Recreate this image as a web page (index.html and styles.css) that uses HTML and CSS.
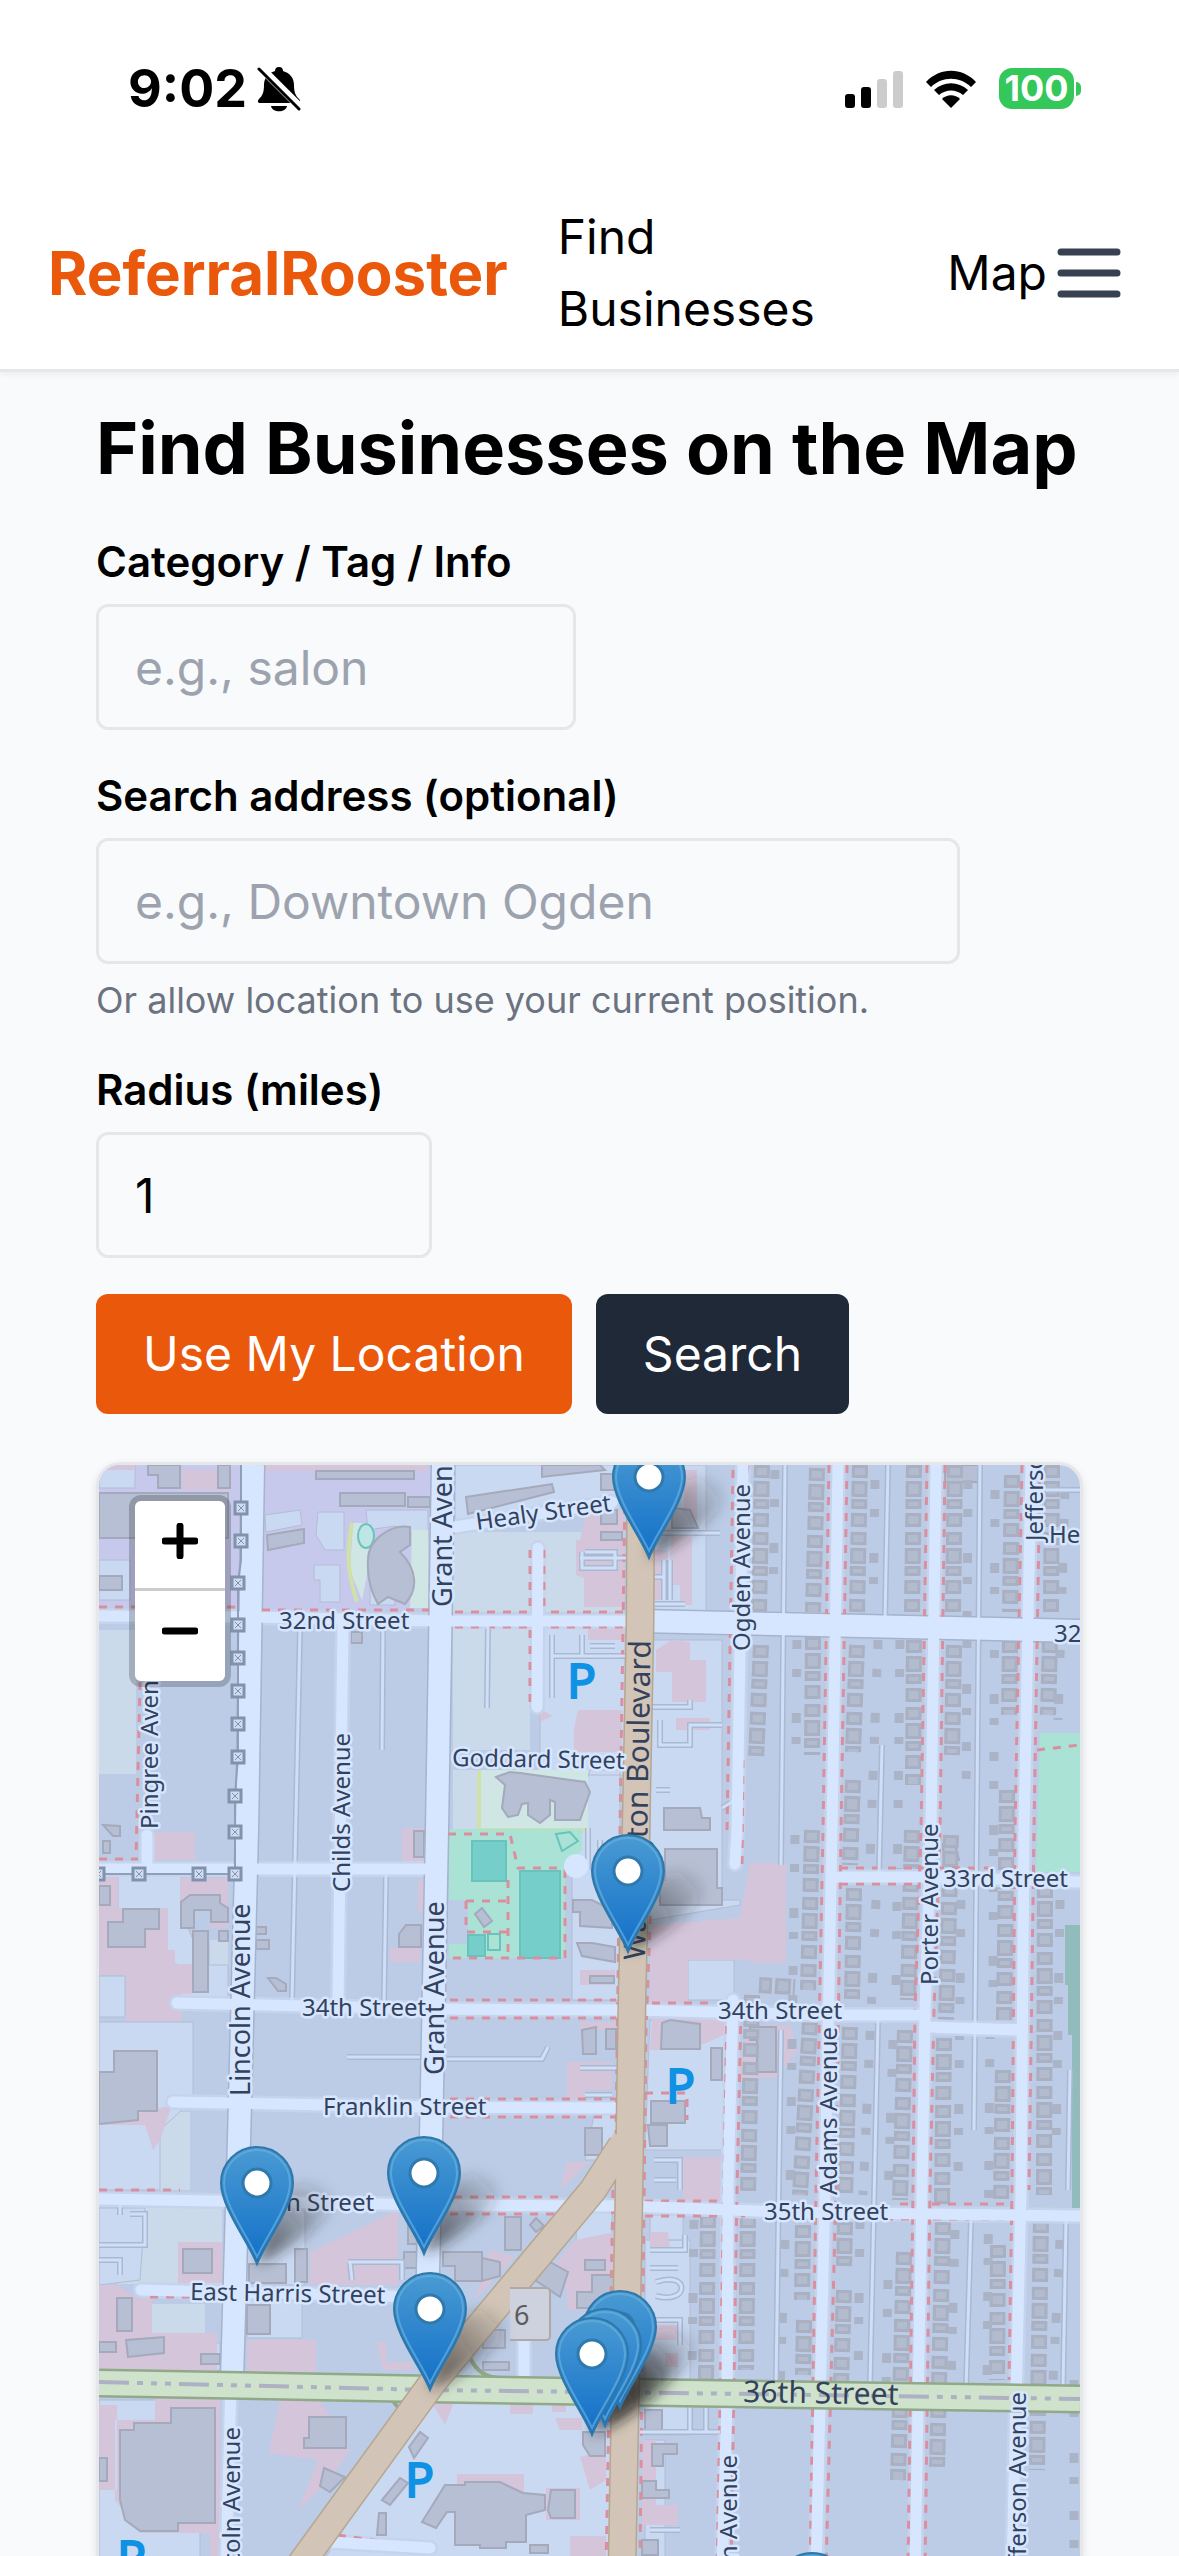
FILE: index.html
```html
<!DOCTYPE html>
<html lang="en">
<head>
<meta charset="utf-8">
<meta name="viewport" content="width=device-width, initial-scale=1">
<title>ReferralRooster – Map</title>
<link rel="stylesheet" href="styles.css">
</head>
<body>
<div class="status">
  <div class="status-left">
    <span class="clock">9:02</span>
    <svg class="bell" viewBox="0 0 44 46" aria-label="Silent">
      <path d="M22 1c3 0 4 2 4 4 7 2 11 7 11 14 0 8 2 11 5 14 2 2 1 4-1 4H3c-2 0-3-2-1-4 3-3 5-6 5-14 0-7 4-12 11-14 0-2 1-4 4-4z"/>
      <path d="M14 40h16c-1 7-15 7-16 0z"/>
      <path d="M2 0l44 44" stroke="#fff" stroke-width="8"/>
      <path d="M2 3l40 40" stroke="#000" stroke-width="3" stroke-linecap="round"/>
    </svg>
  </div>
  <div class="status-right">
    <svg class="signal" viewBox="0 0 58 38" aria-label="Signal">
      <rect x="0" y="24" width="10" height="14" rx="3"/>
      <rect x="16" y="17" width="10" height="21" rx="3"/>
      <rect x="32" y="9" width="10" height="29" rx="3" fill="#ccc"/>
      <rect x="48" y="1" width="10" height="37" rx="3" fill="#ccc"/>
    </svg>
    <svg class="wifi" viewBox="0 0 52 38" aria-label="Wi-Fi">
      <path d="M1 12C15-3 37-3 51 12L46 17C35 6 17 6 6 17z"/>
      <path d="M9 20c10-9 24-9 34 0l-5 5c-7-6-17-6-24 0z"/>
      <path d="M17 29c5-5 13-5 18 0l-9 9z"/>
    </svg>
    <div class="battery"><span class="battery-body">100</span><span class="battery-cap"></span></div>
  </div>
</div>

<header class="header">
  <a class="logo" href="#">ReferralRooster</a>
  <nav class="nav">
    <a class="nav-find" href="#">Find Businesses</a>
    <a href="#">Map</a>
  </nav>
  <button class="menu" type="button" aria-label="Open menu">
    <svg viewBox="0 0 24 24"><path d="M4 6h16M4 12h16M4 18h16"/></svg>
  </button>
</header>

<main class="main">
  <h1 class="title">Find Businesses on the Map</h1>
  <form class="form">
    <div class="field">
      <label for="category">Category / Tag / Info</label>
      <input class="input input-category" id="category" type="text" placeholder="e.g., salon">
    </div>
    <div class="field">
      <label for="address">Search address (optional)</label>
      <input class="input input-address" id="address" type="text" placeholder="e.g., Downtown Ogden">
      <p class="hint">Or allow location to use your current position.</p>
    </div>
    <div class="field">
      <label for="radius">Radius (miles)</label>
      <input class="input input-radius" id="radius" type="text" inputmode="numeric" value="1">
    </div>
    <div class="actions">
      <button class="btn btn-primary" type="button">Use My Location</button>
      <button class="btn btn-dark" type="button">Search</button>
    </div>
  </form>

  <div class="map">
    <svg class="tiles" viewBox="99 1465 981 1100">
      <defs>
        <g id="roads-wide">
          <path d="M253 1465L247 1830L239 2140L232 2380"/>
          <path d="M443 1465L437 1830L430 2190L427 2310"/>
          <path d="M640 1621L1080 1631"/>
        </g>
        <g id="roads-mid">
          <path d="M99 1616L250 1617L440 1621L640 1621"/>
          <path d="M838 1465L832 1830L825 2190L816 2570"/>
          <path d="M936 1465L931 1830L925 2010L922 2190L915 2570"/>
          <path d="M1031 1465L1024 1830L1021 2190L1012 2570"/>
          <path d="M743 1465L737 1830L735 1864"/>
          <path d="M733 2000L728 2190L727 2400L722 2570"/>
          <path d="M99 1869L437 1869"/>
          <path d="M832 1877L931 1877L1080 1882"/>
          <path d="M177 2003L430 2009L632 2010L829 2015L925 2015"/>
          <path d="M925 2027L1022 2030"/>
          <path d="M173 2102L430 2107L632 2108"/>
          <path d="M99 2199L430 2205L628 2206L780 2212L1080 2216"/>
          <path d="M141 2290L420 2297"/>
          <path d="M343 1622L338 2006"/>
          <path d="M538 1548L537 1707"/>
          <path d="M231 2380L226 2570"/>
          <path d="M147 1835V1868M524 2320V2385"/>
          <path d="M455 1527L612 1502M330 2542L430 2548"/>
        </g>
        <g id="roads-thin">
          <path d="M300 1628L292 2000M383 1630L382 1750M386 1875L384 2002M488 1625L487 1708"/>
          <path d="M785 1465L781 1865M781 2030L776 2385M888 1465L885 1620M882 1745L879 1875M878 2020L870 2385M980 1465L974 2130M971 2220L966 2390M1066 2220L1063 2390"/>
          <path d="M347 2057L420 2057M447 2059L542 2059L548 2047M1070 2070L1068 2190"/>
          <path d="M1045 1490H1080M650 1533L720 1533"/>
          <path d="M650 1577H664M664 1560V1600M670 1560V1600M655 1604H685M652 1707H690V1700M660 1720V1745H690V1725H722M656 1790H670"/>
          <path d="M580 1558H628M585 1552H615V1568H582V1552M552 1635V1698M582 1635V1656H625M590 1646H615M552 1656H582"/>
          <path d="M650 2250H685V2235M650 2268H678M656 2282C690 2270 690 2305 656 2296M648 2320H680V2345M640 2432H720M690 2405V2432M706 2405V2432M650 2530H680"/>
          <path d="M580 2068H618M585 2095H612M654 2160H680V2190M654 2180H676M588 1828V1870M600 1840V1870M735 1800L722 1808"/>
          <path d="M120 2215V2205M130 2214H145V2245H99M99 2260H120V2275M348 2262H402V2280M350 2262L352 2280"/>
        </g>
        <g id="lots">
          <path d="M762 1465L759 1612M761 1645L756 1760"/>
          <path d="M817 1468L813 1612M813 1637L812 1755M812 1830L808 1990M810 2022L800 2195M803 2225L802 2300M804 2320L803 2375"/>
          <path d="M860 1465L857 1612M857 1645L853 1752M853 1780L850 1865M854 1888L852 2000M850 2027L845 2195M845 2222L844 2270M844 2290L841 2385"/>
          <path d="M914 1465L912 1612M914 1640L913 1785M912 1830L908 2000M905 2030L900 2200M904 2252L898 2480"/>
          <path d="M955 1465L953 1612M954 1645L952 1755M951 1835L946 2020M944 2038L942 2205M943 2222L937 2470"/>
          <path d="M1012 1475L1010 1612M1010 1640L1009 1715M1007 1790L1004 2020M1003 2070L1001 2200M998 2245L997 2380"/>
          <path d="M1052 1465L1051 1612M1050 1640L1048 1715M1045 1885L1044 2195M1041 2220L1037 2470"/>
          <path d="M708 2215L706 2380M748 2215L746 2370M752 1995L748 2195M759 1985L795 1987"/>
        </g>
        <g id="sheds">
          <path d="M775 1470L773 1600M797 1640L796 1745M795 1835L790 2190M785 2240L780 2390"/>
          <path d="M875 1480L873 1610M878 1640L870 1860M876 1900L863 2195M860 2220L858 2380"/>
          <path d="M900 1640L896 1990M893 2040L888 2200M888 2280L886 2390"/>
          <path d="M968 1480L966 1800M961 1900L958 2180M955 2230L950 2420"/>
          <path d="M995 1490L993 1990M990 2030L987 2390M1065 1490L1058 1720M1060 1900L1056 2150M1060 2240L1050 2440M1074 2380V2570"/>
          <path d="M694 2220L692 2370"/>
        </g>
        <g id="walks">
          <path d="M829 1465L823 1830L816 2190L810 2570M847 1465L841 1830L836 2190L826 2570"/>
          <path d="M927 1465L921 1830L915 2010L913 2190L908 2570M945 1465L940 1830L934 2010L930 2190L925 2570"/>
          <path d="M1022 1465L1015 1830L1012 2190L1009 2380M1040 1465L1034 1830L1029 2190"/>
          <path d="M733 1470L727 1830M748 1465L746 1480M743 1760L742 1865M727 2010L717 2570M741 2010L737 2190L731 2570"/>
          <path d="M625 1490L620 1830L616 2135M613 2190L606 2570M651 1900L646 2030L640 2556"/>
          <path d="M455 1612H627M455 1627H627M450 2000H616M450 2018H616M450 2099H616M450 2117H616M454 2197H560M450 2214H560M645 2201H740M645 2216H745"/>
          <path d="M99 1607H250M262 1610H432M99 1859H138M99 2190H180M840 1868H1000M840 1884H920M652 2003H710M900 2204H1010M885 2219H1010"/>
          <path d="M530 1630V1710M530 1550V1610M544 1550V1610M140 1682L136 1860M645 2093H687V2120M338 2535L420 2547M150 2297H200"/>
          <path d="M448 1834H510L518 1868H560M565 1870V1958H448M508 1880V1958M466 1901H508M466 1901V1932H508M1037 1750L1080 1745M455 2400H640"/>
        </g>
        <linearGradient id="pin-fill" x1="0" y1="0" x2="0" y2="1">
          <stop offset="0" stop-color="#4a9bd3"/><stop offset="1" stop-color="#126fc8"/>
        </linearGradient>
        <filter id="soft" x="-30%" y="-30%" width="160%" height="160%"><feGaussianBlur stdDeviation="7"/></filter>
        <linearGradient id="shade" x1="0" y1="1" x2="1" y2="0">
          <stop offset="0" stop-color="#222" stop-opacity=".75"/><stop offset="1" stop-color="#222" stop-opacity="0"/>
        </linearGradient>
        <path id="pin-shadow" d="M0 0L14-50C26-84 62-88 74-70C84-52 44-22 0 0z" fill="url(#shade)" filter="url(#soft)"/>
        <g id="pin">
          <path d="M0-1C-8-22-36-58-36-82A36 36 0 0 1 36-82C36-58 8-22 0-1z" fill="url(#pin-fill)" stroke="#2e77a9" stroke-width="2"/>
          <path d="M0-8C-9-28-33-60-33-82A33 33 0 0 1 33-82C33-60 9-28 0-8z" fill="none" stroke="#67afde" stroke-width="2" opacity=".7"/>
          <circle cy="-82" r="14" fill="#fff" stroke="#2f79ad" stroke-width="3"/>
        </g>
        <g id="rail-post"><rect x="-6" y="-6" width="12" height="12" fill="#cfdcf2" stroke="#8192ac" stroke-width="3"/><path d="M-3-3L3 3M3-3L-3 3" stroke="#8192ac" stroke-width="1"/></g>
      </defs>

      <rect x="99" y="1465" width="981" height="1100" fill="#bccce6"/>

      <!-- land use -->
      <g fill="#c7c9ec">
        <path d="M99 1465H240V1607H99zM262 1468H433V1610H262z"/>
      </g>
      <g fill="#cbdaeb">
        <path d="M99 1630H136V1774H99zM453 1532H622V1612H453zM453 1628H530V1750H453zM453 1770H480V1830H453zM210 1940H228V1995H210zM158 2112H190V2190H158zM145 2208H222V2284H118zM152 2304H205V2333H152z"/>
      </g>
      <g fill="#c9d9f1" class="lined">
        <path d="M99 1465H135V1488H99zM99 1560H130V1600H99zM455 1465H622V1500L455 1525zM540 1628H625V1775H540zM590 1770H620V2000H572V1830zM650 1465H706V1612H650zM650 1640H722V1900H740V1905L650 1920z"/>
        <path d="M118 1876H181V1912L204 1965H228V1998H177V1964H167V1910H118zM99 1976H125V2017H99zM99 2022H193V2100L160 2130V2190H99zM650 2020H725V2150H645zM595 2110H625V2160H585z"/>
        <path d="M99 2208H145L140 2280L99 2285zM247 2210H305V2285H247zM247 2300H302V2338H247zM190 2343H220V2370H190zM430 2390L615 2402V2570H318zM99 2400H200V2570H99zM650 2215H683V2240H650zM577 2210H612V2250L575 2275zM645 2240H690V2435H645z"/>
        <path d="M265 1515L300 1510L302 1525L266 1532zM318 1512H344V1550H325L316 1535zM314 1565H340V1602H320V1580H314zM366 1510H428V1540L395 1526L368 1530zM645 2440H665V2560H645zM688 1960H734V2000H688zM370 1560H395V1605H370z"/>
      </g>
      <g fill="#d4c5da">
        <path d="M99 1465H135V1470H99zM182 1470H232V1490H182zM262 1465H428V1471H262zM586 1514L624 1510V1607H584V1578L576 1575V1540H580zM578 1710H622V1752H574V1728zM588 1628H625V1640H588zM540 1708L552 1716L540 1722z"/>
        <path d="M656 1650L672 1640L690 1642V1660H706V1702H672V1672H656zM676 1718H710V1730H676zM672 1530H692V1605H680V1585H668zM684 1470H697V1520H684zM153 1832H195V1860H153zM99 1876H118V1908H168V1950H175V1964H192V1994H182V2021H126V1975H99z"/>
        <path d="M180 1878H228V1928H210V1900H180zM402 1828H424V1862H402zM390 1948H420V1962H390zM418 1880H424V1912H418zM750 1863H786V1963H750zM650 1925L740 1918L750 1862V1960H688V2003H650zM652 2018H735V2030L690 2050H650z"/>
        <path d="M580 1970H615V1985H580zM580 2022H616V2030H580zM567 2062H612V2090H585V2100H567zM683 2157H722V2200H683zM567 2162H590L560 2190zM724 2055H745V2080H724zM755 2025H790L798 2050L777 2078H745V2030z"/>
        <path d="M99 2118L150 2111L172 2105L160 2140L153 2150L145 2125H99zM99 2285H117L137 2297H152V2333H217V2372H99zM178 2242H222V2283H178zM247 2340H316V2372H247zM310 2252L398 2210V2285H310zM280 2400H320L350 2450L330 2480L298 2510L318 2460L269 2453z"/>
        <path d="M376 2342H386V2362H412V2370H383zM119 2398H155V2420H115V2500L140 2533H210V2570H220V2398zM99 2405H117V2490H99zM575 2240L615 2232V2310H567V2290L555 2265zM650 2232H668L670 2250H650zM652 2325H680V2340H654zM665 2353H678V2367H665z"/>
        <path d="M457 2474H524V2500L500 2492H457zM510 2402H533V2414H510zM552 2402H566V2412H552zM555 2418H582V2430H560zM580 2457L606 2450V2480L590 2490zM570 2536H606V2570H570zM546 2488H580V2520H546zM642 2440H656V2505H678V2525H642zM430 2400H455L445 2425zM490 2250L515 2257L475 2300zM652 1550H668V1600H652z"/>
      </g>
      <g fill="#cfe6e4"><path d="M480 1770H588V1830H480zM353 1523H370V1560L362 1600L350 1570zM412 1530H428V1608H410z"/></g>
      <path d="M352 1523C345 1560 350 1580 357 1602M479 1770V1830H588" fill="none" stroke="#cfe0a8" stroke-width="4"/>
      <g fill="#aae2d5"><path d="M449 1829H582V1850L565 1870V1958H449V1944H468V1900H449zM1040 1733H1080V1872H1036z"/></g>
      <path d="M1065 1925H1080V2216H1072V2035H1068V1985H1065z" fill="#92bcbc"/>
      <g fill="#76cecb" stroke="#69c3bd" stroke-width="2">
        <path d="M472 1841H506V1881H472zM520 1871H560V1958H520zM468 1935H485V1956H468z"/>
        <path d="M488 1934H500V1950H488zM556 1834L570 1832L578 1841L562 1851z" fill="#aae2d5"/>
        <ellipse cx="366" cy="1536" rx="8" ry="12" fill="#bde6e4"/>
      </g>

      <!-- buildings -->
      <g fill="#b6bfd3" stroke="#a4a9bc" stroke-width="2">
        <path d="M148 1465H180V1488H158V1475H148zM218 1465H230V1488H218zM99 1493H228V1538H99zM99 1576H122V1590H99zM316 1471H414V1479H316zM340 1493H405V1506H340zM408 1497H430V1507H408zM267 1535L304 1529V1543L268 1550z"/>
        <path d="M368 1560C368 1540 390 1524 410 1527V1545L400 1552C418 1570 418 1590 405 1604L388 1597L378 1604C370 1590 367 1575 368 1560z"/>
        <path d="M351 1632H362V1643H351zM466 1497L552 1484L554 1492L468 1514zM542 1465H600L605 1470L542 1477zM601 1474H615V1490H601zM601 1510H617V1524H601zM601 1532H622V1540H601zM672 1508L690 1510L698 1528H672z"/>
        <path d="M496 1777L510 1772L520 1773L585 1782L590 1792L580 1820H555V1802L550 1800V1815L540 1823L528 1815V1803L522 1804L518 1815L508 1817L502 1808L505 1785zM664 1808H700L702 1818H710V1830H664zM945 1465H978V1482H945z"/>
        <path d="M103 1825L120 1826V1836H113zM103 1841H110V1853H103zM99 1886H110V1905H99zM123 1909H159V1929H145V1947H108V1922H123zM181 1902L190 1895H220V1903L228 1908V1922H211V1910H194V1928H181zM193 1931H208V1992H193zM219 1931H228V1941H219z"/>
        <path d="M256 1927H266V1934H256zM256 1940H269V1949H256zM268 1978H276L286 1984V1991H278zM414 1831H424V1857H414zM399 1934L406 1925H421V1947H399zM114 2051H157V2111H138V2120L99 2124V2072H114z"/>
        <path d="M665 1849H717V1888H722V1905H660V1880H665zM573 1900H592L612 1910V1928L580 1926V1912H573zM577 1943H592L615 1947V1962L582 1956zM590 1976H614V1983H590zM582 2030L596 2027V2054H583zM606 2029H616V2049H606zM475 1914L482 1908L492 1921L484 1927z"/>
        <path d="M662 2023L670 2020L700 2024V2049H661zM711 2048H722V2080H711zM651 2101H685V2123H651zM648 2125H667V2146H650zM585 2128H602V2155H585zM750 2027H776V2072H757V2040H750zM943 1844H955L959 1860H944z"/>
        <path d="M183 2249H212V2273H183zM249 2264H286V2283H249zM295 2249H307V2282H295zM117 2298H132V2331H117zM99 2342H116V2352H99zM126 2340L164 2337V2353L128 2357zM201 2354H220V2364H201zM247 2305H270V2334H247zM408 2225H418V2244H408zM404 2252H418V2268H404z"/>
        <path d="M171 2408H215V2523H178V2531H140L125 2520L120 2500V2430H134V2423H171zM309 2417H346V2448H304V2438H309zM324 2468L345 2477L330 2492L320 2486zM99 2458H107V2481H99zM409 2447L420 2432L428 2438L414 2458zM382 2500L400 2478L408 2483L390 2505zM379 2513H386V2535H377z"/>
        <path d="M505 2217H521V2250H505zM530 2225L536 2218L544 2226L536 2232zM443 2252H482V2281H455V2266H443zM482 2258L500 2262V2276L482 2281zM550 2262L568 2272L560 2297L535 2280zM585 2260H605V2270H585zM592 2275H615V2308H577V2292H592zM483 2362H509V2370H483zM483 2330H505V2348H483z"/>
        <path d="M445 2485H465V2482H500L523 2493L545 2495V2510L526 2515V2542H506V2548H480V2545H455V2512H447L436 2528L422 2522zM551 2490H575V2518H551L548 2510zM583 2432H605V2456H590L583 2445zM645 2410H662V2432H645zM652 2444H677V2454H663V2466H652zM642 2481H656V2490H669V2498H642zM642 2540H658V2555H642zM530 2545H548V2553H530z"/>
      </g>

      <!-- residential lots -->
      <use href="#lots" class="lot-edge"/>
      <use href="#lots" class="lot-roof"/>
      <use href="#sheds" class="shed"/>

      <!-- streets -->
      <use href="#roads-thin" class="case-thin"/>
      <use href="#roads-mid" class="case-mid"/>
      <use href="#roads-wide" class="case-wide"/>
      <use href="#walks" class="walk"/>
      <use href="#roads-thin" class="fill-thin"/>
      <use href="#roads-mid" class="fill-mid"/>
      <use href="#roads-wide" class="fill-wide"/>
      <circle cx="576" cy="1866" r="12" fill="#d7e6ff"/>

      <!-- 36th Street -->
      <g fill="none">
        <path d="M99 2383L430 2389L750 2394L1080 2399" stroke="#91a988" stroke-width="29"/>
        <path d="M470 2358Q480 2378 500 2378M392 2400L402 2412" stroke="#91a988" stroke-width="4"/>
        <path d="M99 2383L430 2389L750 2394L1080 2399" stroke="#cfe2cb" stroke-width="24"/>
        <path d="M99 2382L430 2390L750 2394L1080 2399" stroke="#aeb0c4" stroke-width="4" stroke-dasharray="30 8 6 8 6 8 6 8"/>
      </g>

      <!-- Washington Boulevard and diagonal -->
      <g fill="none">
        <path d="M641 1455L640 1625L636 1830L632 2000L629 2190L622 2570M622 2145L593 2190L433 2382L295 2572" stroke="#b6a68f" stroke-width="29"/>
        <path d="M641 1455L640 1625L636 1830L632 2000L629 2190L622 2570M625 2140L593 2190L433 2382L295 2572" stroke="#d2c5b7" stroke-width="26"/>
      </g>

      <!-- power line -->
      <path d="M241 1465V1560L238 1583V1757L235 1796V1874H99" fill="none" stroke="#8f9fba" stroke-width="2"/>
      <g>
        <use href="#rail-post" x="241" y="1508"/><use href="#rail-post" x="241" y="1541"/><use href="#rail-post" x="238" y="1583"/><use href="#rail-post" x="238" y="1625"/><use href="#rail-post" x="238" y="1658"/><use href="#rail-post" x="238" y="1691"/><use href="#rail-post" x="238" y="1724"/><use href="#rail-post" x="238" y="1757"/><use href="#rail-post" x="235" y="1796"/><use href="#rail-post" x="235" y="1832"/><use href="#rail-post" x="235" y="1874"/><use href="#rail-post" x="199" y="1874"/><use href="#rail-post" x="139" y="1874"/><use href="#rail-post" x="98" y="1874"/>
      </g>

      <g class="shield">
        <path d="M510 2288H546Q550 2288 550 2292V2336Q550 2340 546 2340H510" fill="#cdd2de" stroke="#b0aaa6" stroke-width="2"/>
        <text x="514" y="2325">6</text>
      </g>

      <g class="parking">
        <text x="567" y="1698">P</text><text x="666" y="2103">P</text><text x="405" y="2497">P</text><text x="117" y="2575">P</text>
      </g>

      <g class="label">
        <text x="279" y="1629">32nd Street</text>
        <text transform="translate(477 1530) rotate(-8)">Healy Street</text>
        <text transform="translate(452 1766) rotate(1)">Goddard Street</text>
        <text x="302" y="2016">34th Street</text>
        <text x="718" y="2019">34th Street</text>
        <text x="943" y="1887">33rd Street</text>
        <text x="323" y="2115">Franklin Street</text>
        <text x="286" y="2211">n Street</text>
        <text transform="translate(190 2300) rotate(1)">East Harris Street</text>
        <text x="764" y="2220">35th Street</text>
        <text x="1049" y="1543">He</text>
        <text x="1054" y="1642">32</text>
        <text transform="translate(158 1829) rotate(-90)">Pingree Aven</text>
        <text transform="translate(350 1892) rotate(-90)">Childs Avenue</text>
        <text transform="translate(938 1985) rotate(-90)">Porter Avenue</text>
        <text transform="translate(837 2195) rotate(-90)">Adams Avenue</text>
        <text transform="translate(750 1651) rotate(-90)">Ogden Avenue</text>
        <text transform="translate(1043 1541) rotate(-90)">Jefferso</text>
        <text transform="translate(240 2427) rotate(-90)" class="end">coln Avenue</text>
        <text transform="translate(737 2455) rotate(-90)" class="end">n Avenue</text>
        <text transform="translate(1026 2392) rotate(-90)" class="end">fferson Avenue</text>
      </g>
      <g class="label label-major">
        <text transform="translate(452 1607) rotate(-90)">Grant Aven</text>
        <text transform="translate(250 2096) rotate(-90)">Lincoln Avenue</text>
        <text transform="translate(444 2075) rotate(-90)">Grant Avenue</text>
      </g>
      <text class="label-green" transform="translate(743 2402) rotate(1)">36th Street</text>
      <text class="label-blvd" transform="translate(645 1960) rotate(-89)">Washington Boulevard</text>

      <!-- markers -->
      <use href="#pin-shadow" x="649" y="1558"/><use href="#pin-shadow" x="628" y="1952"/><use href="#pin-shadow" x="257" y="2264"/><use href="#pin-shadow" x="424" y="2254"/><use href="#pin-shadow" x="430" y="2390"/><use href="#pin-shadow" x="620" y="2408"/><use href="#pin-shadow" x="605" y="2426"/><use href="#pin-shadow" x="592" y="2435"/>
      <use href="#pin" x="649" y="1559"/><use href="#pin" x="628" y="1953"/><use href="#pin" x="424" y="2255"/><use href="#pin" x="257" y="2265"/><use href="#pin" x="430" y="2391"/><use href="#pin" x="620" y="2409"/><use href="#pin" x="605" y="2427"/><use href="#pin" x="592" y="2436"/><use href="#pin" x="812" y="2671"/>
    </svg>
    <div class="zoom">
      <button type="button" aria-label="Zoom in"><svg viewBox="0 0 36 36"><path d="M3 18h30M18 3v30"/></svg></button>
      <button type="button" aria-label="Zoom out"><svg viewBox="0 0 36 36"><path d="M3 18h30"/></svg></button>
    </div>
  </div>
</main>
</body>
</html>
```

FILE: styles.css
```css
* { box-sizing: border-box; }
body {
  margin: 0;
  height: 100vh;
  overflow: hidden;
  display: flex;
  flex-direction: column;
  background: #f9fafb;
  color: #000;
  font: 400 48px/72px Inter, "Liberation Sans", sans-serif;
}
a { color: inherit; text-decoration: none; }
button { font: inherit; border: 0; padding: 0; }
svg { display: block; }

/* Status bar */
.status {
  height: 177px;
  flex: none;
  display: flex;
  justify-content: space-between;
  align-items: center;
  padding: 0 98px 0 128px;
  background: #fff;
}
.status-left, .status-right, .battery { display: flex; align-items: center; }
.status-left { gap: 10px; }
.status-right { gap: 22px; }
.clock { font-size: 52px; font-weight: 700; }
.bell { width: 44px; height: 46px; }
.signal { width: 58px; height: 38px; }
.wifi { width: 52px; height: 38px; }
.battery { gap: 2px; }
.battery-body {
  width: 75px;
  border-radius: 13px;
  background: #34c759;
  color: #fff;
  font-size: 36px;
  font-weight: 700;
  line-height: 41px;
  text-align: center;
}
.battery-cap { width: 5px; height: 14px; border-radius: 0 6px 6px 0; background: #34c759; }

/* Header */
.header {
  flex: none;
  display: flex;
  align-items: center;
  padding: 24px 48px;
  background: #fff;
  border-bottom: 3px solid #e5e7eb;
  box-shadow: 0 3px 6px rgba(0, 0, 0, .05);
}
.logo { color: #ea580c; font-size: 60px; font-weight: 700; margin-right: 50px; }
.nav { flex: 1; display: flex; align-items: center; justify-content: space-between; }
.nav-find { flex: 0 1 288px; }
.menu { background: none; }
.menu svg { width: 84px; height: 84px; fill: none; stroke: #374151; stroke-width: 2; stroke-linecap: round; }

/* Search form */
.main { flex: 1; min-height: 0; display: flex; flex-direction: column; padding: 28px 96px 0; }
.title { margin: 0 0 36px; font-size: 72px; line-height: 96px; font-weight: 700; }
.form { display: flex; flex-direction: column; gap: 36px; margin-bottom: 48px; }
.field { display: flex; flex-direction: column; align-items: flex-start; gap: 12px; }
.field label { font-size: 42px; line-height: 60px; font-weight: 600; }
.input {
  max-width: 100%;
  height: 126px;
  padding: 0 36px;
  border: 3px solid #e5e7eb;
  border-radius: 12px;
  background: transparent;
  color: #000;
  font: inherit;
}
.input::placeholder { color: #9ca3af; opacity: 1; }
.input-category { width: 480px; }
.input-address { width: 864px; }
.input-radius { width: 336px; }
.hint { margin: 0; color: #6b7280; font-size: 36px; line-height: 48px; }
.actions { display: flex; gap: 24px; }
.btn { padding: 24px 47px; border-radius: 12px; color: #fff; }
.btn-primary { background: #ea580c; }
.btn-dark { background: #1f2937; }

/* Map */
.map {
  position: relative;
  flex: 1;
  min-height: 0;
  overflow: hidden;
  border: 3px solid #e5e7eb;
  border-bottom: 0;
  border-radius: 24px 24px 0 0;
  box-shadow: 0 3px 9px rgba(0, 0, 0, .1);
}
.tiles { width: 100%; height: auto; }
.zoom {
  position: absolute;
  top: 30px;
  left: 30px;
  border: 6px solid rgba(0, 0, 0, .2);
  border-radius: 12px;
  background-clip: padding-box;
}
.zoom button {
  display: flex;
  align-items: center;
  justify-content: center;
  width: 90px;
  height: 90px;
  padding-bottom: 10px;
  background: #fff;
}
.zoom button:first-child { padding-bottom: 7px; border-bottom: 3px solid #ccc; border-radius: 6px 6px 0 0; }
.zoom button:last-child { border-radius: 0 0 6px 6px; }
.zoom svg { width: 36px; height: 36px; stroke: #000; stroke-width: 7; stroke-linecap: round; }

.lined { stroke: #b4bcd4; stroke-width: 1; }
.lot-edge, .lot-roof, .shed, .walk,
.case-thin, .case-mid, .case-wide, .fill-thin, .fill-mid, .fill-wide { fill: none; }
.lot-edge { stroke: #a8b0c2; stroke-width: 16; stroke-dasharray: 13 3 16 2 10 4 14 5; }
.lot-roof { stroke: #b3bccf; stroke-width: 10; stroke-dasharray: 7 9 10 8 4 10 8 11; stroke-dashoffset: -3; }
.shed { stroke: #abb3c6; stroke-width: 9; stroke-dasharray: 9 20 8 36 10 14 7 27; }
.walk { stroke: #d98f9d; stroke-width: 3; stroke-dasharray: 8 8; }
.case-thin { stroke: #aab8d2; stroke-width: 6; }
.case-mid { stroke: #c6d3ec; stroke-width: 16; stroke-linecap: round; }
.case-wide { stroke: #a5b3cd; stroke-width: 25; }
.fill-thin { stroke: #d0dff8; stroke-width: 3; }
.fill-mid { stroke: #d7e6ff; stroke-width: 11; stroke-linecap: round; }
.fill-wide { stroke: #d7e6ff; stroke-width: 22; }

.label, .label-green, .label-blvd, .parking, .shield { font-family: "Noto Sans", sans-serif; }
.label, .label-green, .label-blvd { fill: #33425c; }
.label { font-size: 24px; stroke: #d7e6ff; stroke-width: 5; stroke-linejoin: round; paint-order: stroke; }
.label-major { font-size: 27px; }
.label-green { font-size: 30px; }
.label-blvd { font-size: 30px; }
.end { text-anchor: end; }
.parking { font-size: 48px; fill: #1092e4; stroke: #1092e4; stroke-width: 2; }
.shield text { font-size: 27px; fill: #5d5d5d; }
```
